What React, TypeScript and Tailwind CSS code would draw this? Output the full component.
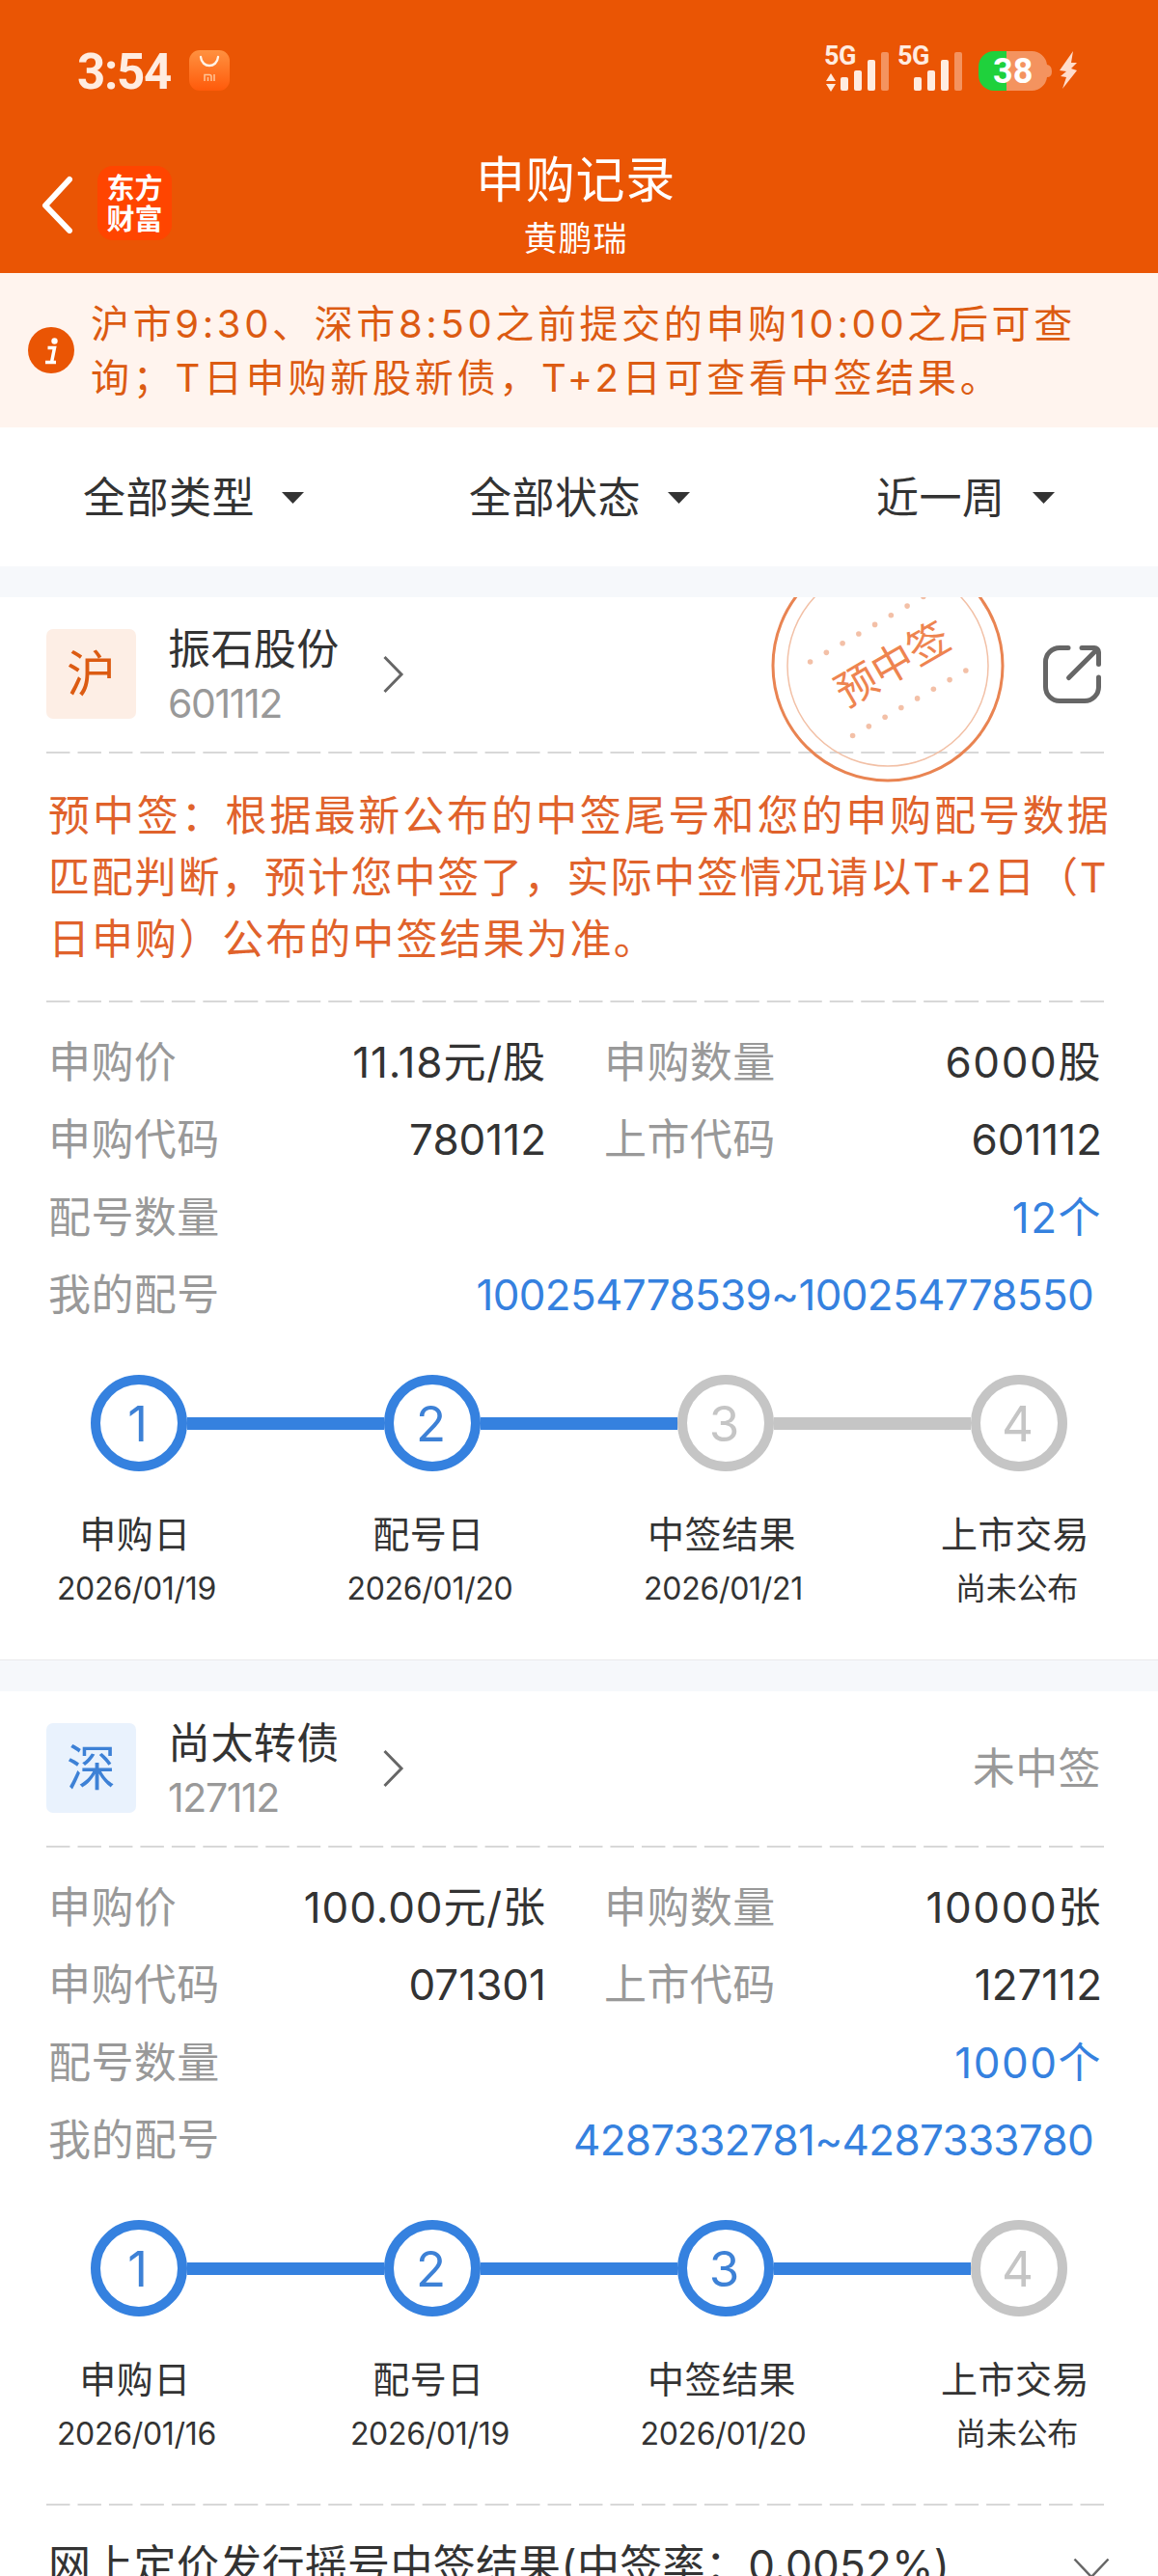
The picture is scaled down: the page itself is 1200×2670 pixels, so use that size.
import clsx from "clsx";

type Step = { label: string; date: string };

const SignalBars = () => (
  <g fill="#ffece0">
    <rect x="17" y="31" width="8" height="14" rx="2" />
    <rect x="31" y="24" width="8" height="21" rx="2" />
    <rect x="45" y="13" width="8" height="32" rx="2" />
    <rect x="59" y="5" width="8" height="40" rx="2" fill="#f4935f" />
  </g>
);

const Signal = ({ active }: { active?: boolean }) => (
  <div className="relative w-[76px] h-[48px]">
    <svg width="76" height="48" viewBox="0 0 76 48">
      <SignalBars />
      {active && <path d="M7 27l5 8H2zM7 46l5-8H2z" fill="#ffece0" />}
    </svg>
    <span className="absolute left-0 top-0 text-[27px] leading-[19px] font-bold font-[Roboto,sans-serif] text-[#ffece0] tracking-[-0.500px]">
      5G
    </span>
  </div>
);

const StatusBar = () => (
  <div className="flex items-center h-[146px] pl-[80px] pr-[83px]">
    <span className="w-[116px] mt-[4px] text-[51px] leading-[60px] font-bold font-[Roboto,sans-serif] text-[#ffece0] tracking-[-1.300px]">
      3:54
    </span>
    <svg width="42" height="42" viewBox="0 0 42 42">
      <defs>
        <linearGradient id="store" x1="0" y1="0" x2="0" y2="1">
          <stop offset="0" stopColor="#ff9140" />
          <stop offset="1" stopColor="#ff5a0a" />
        </linearGradient>
      </defs>
      <rect width="42" height="42" rx="11" fill="url(#store)" />
      <path d="M12 7c1 12 17 12 18 0" fill="none" stroke="#fff3e6" strokeWidth="2.4" strokeLinecap="round" />
      <path d="M16 32v-6.500h5q2 0 2 2V32M19.500 28v4M26 25v7" fill="none" stroke="#ffc596" strokeWidth="1.500" />
    </svg>
    <div className="ml-auto flex items-center">
      <div className="flex mr-[8px]">
        <Signal active />
        <Signal />
      </div>
      <div className="relative w-[76px] h-[41px]">
        <svg width="76" height="41" viewBox="0 0 76 41">
          <path d="M29 0H55a16 16 0 0 1 16 14q5 1 5 7t-5 6a16 16 0 0 1-16 14H29z" fill="#f4935f" />
          <path d="M29 0H16A16 16 0 0 0 0 16v9a16 16 0 0 0 16 16h13z" fill="#1fd13c" />
        </svg>
        <span className="absolute left-[15px] top-0 text-[36px] leading-[42px] font-bold font-[Roboto,sans-serif] text-white">
          38
        </span>
      </div>
      <svg className="ml-[7px]" width="20" height="40" viewBox="0 0 20 40">
        <path d="M15 0L1 20l7 1-6 5 6 1-4 12L19 20l-6-2 6-6h-6z" fill="#ffdccb" />
      </svg>
    </div>
  </div>
);

const Header = () => (
  <header className="bg-[#ea5504] h-[283px] text-white">
    <StatusBar />
    <div className="grid grid-cols-3 h-[137px]">
      <div className="flex pl-[41px] pt-[26px] gap-[24px]">
        <svg className="mt-[10px]" width="36" height="60" viewBox="0 0 36 60" fill="none" stroke="#fff" strokeWidth="6">
          <path d="M31 4L6 31l25 26" strokeLinecap="round" strokeLinejoin="round" />
        </svg>
        <div className="w-[77px] h-[77px] rounded-[16px] bg-[#ff4500] text-[29px] leading-[32px] font-bold text-center pt-[8px]">
          <p>东方</p>
          <p>财富</p>
        </div>
      </div>
      <div className="text-center pr-[7px]">
        <h1 className="text-[51px] leading-[60px] mt-[11px] tracking-[0.700px]">申购记录</h1>
        <p className="text-[35px] leading-[42px] mt-[9px] tracking-[0.800px]">黄鹏瑞</p>
      </div>
    </div>
  </header>
);

const Notice = () => (
  <div className="flex items-center h-[160px] bg-[#fff4ee] pl-[29px]">
    <svg width="48" height="48" viewBox="0 0 48 48">
      <circle cx="24" cy="24" r="24" fill="#ea5504" />
      <circle cx="27.500" cy="14.500" r="3.200" fill="#fff" />
      <path d="M20.500 21.500h7l-3 15M18 36.500h11" fill="none" stroke="#fff" strokeWidth="3.500" />
    </svg>
    <div className="ml-[17px] pt-[1px] text-[40px] leading-[56px] text-[#dc5b12] whitespace-nowrap">
      <p className="tracking-[3.630px]">沪市9:30、深市8:50之前提交的申购10:00之后可查</p>
      <p className="tracking-[3.750px]">询；T日申购新股新债，T+2日可查看中签结果。</p>
    </div>
  </div>
);

const Filter = ({ label }: { label: string }) => (
  <button className="flex items-center text-[44px] leading-[60px] tracking-[0.500px]">
    {label}
    <svg className="ml-[28px]" width="23" height="12" viewBox="0 0 23 12">
      <path d="M0 0h23L11.500 12z" fill="#333" />
    </svg>
  </button>
);

const Dash = () => (
  <svg className="block" width="1096" height="2">
    <line x1="0" y1="1" x2="1096" y2="1" stroke="#ccc" strokeWidth="1.500" strokeDasharray="24.500 7.970" />
  </svg>
);

const Stamp = () => {
  const dots = [0, 1, 2, 3, 4, 5, 6, 7];
  return (
    <div className="absolute left-[798px] top-[-51px] w-[244px] h-[244px] flex items-center justify-center">
      <svg className="absolute inset-0" width="244" height="244" viewBox="0 0 244 244">
        <circle cx="122" cy="122" r="119" fill="none" stroke="#e98452" strokeWidth="3" />
        <circle cx="122" cy="122" r="104" fill="none" stroke="#f2c0a6" strokeWidth="1.500" />
        {dots.map((i) => (
          <g key={i} fill="#f3c0a7">
            <circle cx={41.6 + i * 16.75} cy={118 - i * 9.65} r="2.800" />
            <circle cx={85.6 + i * 16.75} cy={194.500 - i * 9.65} r="2.800" />
          </g>
        ))}
      </svg>
      <span className="ml-[9px] mb-[4px] text-[43px] leading-[44px] text-[#ee8450] -rotate-30 whitespace-nowrap">
        预中签
      </span>
    </div>
  );
};

const ShareIcon = () => (
  <svg width="60" height="60" viewBox="0 0 60 60" fill="none" stroke="#666" strokeWidth="5" strokeLinecap="round" strokeLinejoin="round">
    <path d="M26 2.500H17A14.500 14.500 0 0 0 2.500 17V43A14.500 14.500 0 0 0 17 57.500H43A14.500 14.500 0 0 0 57.500 43V33" />
    <path d="M40 2.500H53A4.500 4.500 0 0 1 57.500 7V19.500M56 4L26.500 33.500" />
  </svg>
);

type StockHeadProps = { market: string; name: string; code: string; blue?: boolean; children: React.ReactNode };

const StockHead = ({ market, name, code, blue, children }: StockHeadProps) => (
  <div className="flex items-start h-[160px] pt-[33px] pr-[11px]">
    <div
      className={clsx(
        "w-[93px] h-[93px] rounded-[7px] text-[51px] leading-[93px] text-center",
        blue ? "bg-[#e9f2fd] text-[#3d81d6]" : "bg-[#fdeee5] text-[#dc5b12]"
      )}
    >
      {market}
    </div>
    <div className="ml-[33px] w-[223px]">
      <h2 className="text-[44px] leading-[60px] mt-[-9px] tracking-[0.400px]">{name}</h2>
      <p className="text-[41px] leading-[48px] mt-[2px] text-[#999] tracking-[-1.400px]">{code}</p>
    </div>
    <svg className="mt-[27px]" width="22" height="40" viewBox="0 0 22 40" fill="none" stroke="#666" strokeWidth="3">
      <path d="M1.500 2L19 20 1.500 38" />
    </svg>
    <div className="ml-auto h-[93px] flex items-center">{children}</div>
  </div>
);

const Label = ({ children }: { children: string }) => <span className="text-[#999] tracking-[0.400px]">{children}</span>;

type InfoProps = { price: string; amount: string; buyCode: string; listCode: string; count: string; range: string };

const Info = ({ price, amount, buyCode, listCode, count, range }: InfoProps) => (
  <div className="pt-[22px] pl-[2px] pr-[10px] text-[44px] leading-[80.300px] whitespace-nowrap">
    <div className="grid grid-cols-[516px_516px] justify-between">
      <div className="flex justify-between"><Label>申购价</Label><span className="tracking-[0.900px]">{price}</span></div>
      <div className="flex justify-between"><Label>申购数量</Label><span className="tracking-[1.600px]">{amount}</span></div>
      <div className="flex justify-between"><Label>申购代码</Label><span>{buyCode}</span></div>
      <div className="flex justify-between"><Label>上市代码</Label><span>{listCode}</span></div>
    </div>
    <div className="flex justify-between">
      <Label>配号数量</Label>
      <span className="text-[#3581df] tracking-[1.500px]">{count}</span>
    </div>
    <div className="flex justify-between">
      <Label>我的配号</Label>
      <span className="text-[#3581df] pr-[9px] tracking-[-0.700px]">{range}</span>
    </div>
  </div>
);

const Steps = ({ steps, done }: { steps: Step[]; done: number }) => (
  <div className="pt-[43px]">
    <div className="flex items-center pl-[46px]">
      {steps.map((step, i) => (
        <div key={step.label} className="flex items-center">
          {i > 0 && <div className={clsx("w-[204px] h-[13px]", i <= done ? "bg-[#3581df]" : "bg-[#c5c5c5]")} />}
          <div
            className={clsx(
              "w-[100px] h-[100px] rounded-full border-[10px] text-[51px] leading-[81px] text-center pr-[3px]",
              i < done ? "border-[#3581df] text-[#3d81d6]" : "border-[#c5c5c5] text-[#c5c5c5]"
            )}
          >
            {i + 1}
          </div>
        </div>
      ))}
    </div>
    <div className="grid grid-cols-[304px_304px_304px_304px] ml-[-60px] mt-[35px] text-center whitespace-nowrap">
      {steps.map((step) => (
        <div key={step.label}>
          <p className="text-[38px] leading-[60px] tracking-[0.500px]">{step.label}</p>
          <p className="text-[32px] leading-[50px] mt-[2px] pl-[3px] tracking-[-0.300px]">{step.date}</p>
        </div>
      ))}
    </div>
  </div>
);

export default function App() {
  return (
    <div className="w-[1200px] h-[2670px] overflow-hidden bg-white text-[#333] font-[Inter,'Noto_Sans_CJK_SC',sans-serif]">
      <Header />
      <Notice />
      <div className="grid grid-cols-[400px_422px_1fr] h-[144px] pt-[1px] pl-[86px]">
        <Filter label="全部类型" />
        <Filter label="全部状态" />
        <Filter label="近一周" />
      </div>
      <div className="h-[32px] bg-[#f6f8fb]" />

      <section className="relative h-[1101px] overflow-hidden px-[48px]">
        <StockHead market="沪" name="振石股份" code="601112">
          <ShareIcon />
        </StockHead>
        <Dash />
        <Stamp />
        <div className="h-[256px] pt-[32px] pl-[2px] text-[43px] leading-[64px] text-[#e0622b] whitespace-nowrap">
          <p className="tracking-[2.900px]">预中签：根据最新公布的中签尾号和您的申购配号数据</p>
          <p className="tracking-[1.800px]">匹配判断，预计您中签了，实际中签情况请以T+2日（T</p>
          <p className="tracking-[2.050px]">日申购）公布的中签结果为准。</p>
        </div>
        <Dash />
        <Info
          price="11.18元/股"
          amount="6000股"
          buyCode="780112"
          listCode="601112"
          count="12个"
          range="100254778539~100254778550"
        />
        <Steps
          done={2}
          steps={[
            { label: "申购日", date: "2026/01/19" },
            { label: "配号日", date: "2026/01/20" },
            { label: "中签结果", date: "2026/01/21" },
            { label: "上市交易", date: "尚未公布" },
          ]}
        />
      </section>
      <div className="h-[33px] bg-[#f6f8fb] border-t border-[#e9eaec]" />

      <section className="px-[48px]">
        <StockHead market="深" name="尚太转债" code="127112" blue>
          <span className="text-[44px] text-[#999] tracking-[0.400px]">未中签</span>
        </StockHead>
        <Dash />
        <Info
          price="100.00元/张"
          amount="10000张"
          buyCode="071301"
          listCode="127112"
          count="1000个"
          range="4287332781~4287333780"
        />
        <Steps
          done={3}
          steps={[
            { label: "申购日", date: "2026/01/16" },
            { label: "配号日", date: "2026/01/19" },
            { label: "中签结果", date: "2026/01/20" },
            { label: "上市交易", date: "尚未公布" },
          ]}
        />
        <div className="mt-[47px]">
          <Dash />
        </div>
        <div className="flex justify-between pt-[32px] pl-[2px] text-[44px] leading-[60px] whitespace-nowrap">
          <span className="tracking-[0.300px]">网上定价发行摇号中签结果(中签率：0.0052%)</span>
          <svg className="mt-[22px] mr-[2px]" width="38" height="22" viewBox="0 0 38 22" fill="none" stroke="#666" strokeWidth="2.500">
            <path d="M1.500 1.500L19 20 36.500 1.500" />
          </svg>
        </div>
      </section>
    </div>
  );
}
